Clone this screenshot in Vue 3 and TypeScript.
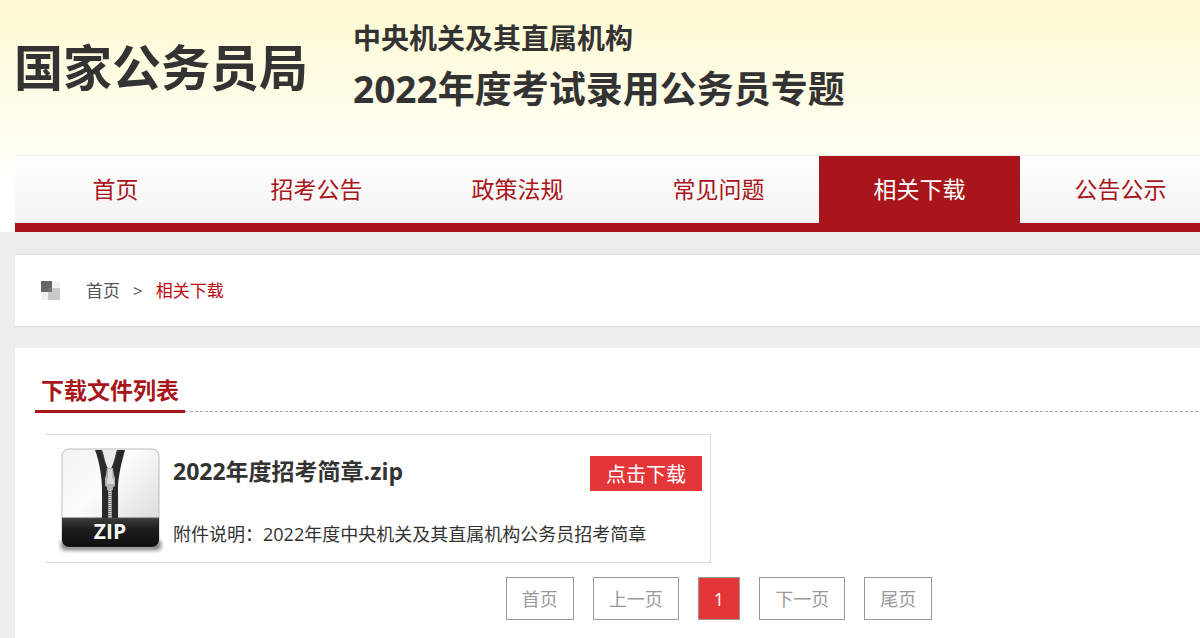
<script setup lang="ts">
import { ref } from 'vue'

interface DownloadFile {
  name: string
  note: string
}

const tabs: string[] = ['首页', '招考公告', '政策法规', '常见问题', '相关下载', '公告公示']
const activeTab = ref('相关下载')

const files: DownloadFile[] = [
  { name: '2022年度招考简章.zip', note: '附件说明：2022年度中央机关及其直属机构公务员招考简章' },
]

const pages: string[] = ['首页', '上一页', '1', '下一页', '尾页']
const currentPage = '1'
</script>

<template>
  <div class="page">
    <header class="header">
      <div class="brand">
        <h1 class="brand-name">国家公务员局</h1>
        <div class="brand-topic">
          <p class="topic-org">中央机关及其直属机构</p>
          <p class="topic-title">2022年度考试录用公务员专题</p>
        </div>
      </div>
      <nav class="nav wide">
        <a
          v-for="tab in tabs"
          :key="tab"
          href="#"
          class="tab"
          :class="{ active: tab === activeTab }"
          @click.prevent="activeTab = tab"
        >{{ tab }}</a>
      </nav>
    </header>

    <nav class="crumbs wide" aria-label="当前位置">
      <svg class="crumb-icon" width="20" height="20" viewBox="0 0 20 20" aria-hidden="true">
        <rect x="11" y="0" width="8" height="8" fill="#f4f4f4" />
        <rect x="0" y="11" width="8" height="8" fill="#f0f0f0" />
        <rect x="7" y="7" width="12" height="12" fill="#cacaca" />
        <rect x="0" y="0" width="11" height="11" fill="#666" />
        <rect x="7" y="7" width="4" height="4" fill="#727272" />
      </svg>
      <a href="#" class="crumb">首页</a>
      <span class="crumb-sep">&gt;</span>
      <a href="#" class="crumb current">相关下载</a>
    </nav>

    <main class="panel wide">
      <div class="panel-head">
        <h2 class="panel-title">下载文件列表</h2>
      </div>

      <article v-for="file in files" :key="file.name" class="file">
        <svg class="file-icon" width="106" height="108" viewBox="0 0 106 108" role="img">
          <defs>
            <linearGradient id="face" x1="0" y1="0" x2="1" y2="1">
              <stop offset="0" stop-color="#f2f2f2" />
              <stop offset="0.4" stop-color="#fcfcfc" />
              <stop offset="1" stop-color="#d2d2d2" />
            </linearGradient>
            <linearGradient id="band" x1="0" y1="0" x2="0" y2="1">
              <stop offset="0" stop-color="#3c3c3c" />
              <stop offset="0.4" stop-color="#1c1c1c" />
              <stop offset="1" stop-color="#101010" />
            </linearGradient>
            <filter id="soft" x="-10%" y="-100%" width="120%" height="300%">
              <feGaussianBlur stdDeviation="2" />
            </filter>
          </defs>
          <rect x="3" y="94" width="100" height="10" rx="4" fill="#777" filter="url(#soft)" />
          <rect x="4" y="3" width="97" height="98" rx="7" fill="url(#face)" stroke="#bcbcbc" />
          <path d="M4 72h97v22a7 7 0 0 1-7 7H11a7 7 0 0 1-7-7z" fill="url(#band)" />
          <path d="M4 72h97" stroke="#555" />
          <path d="M44 4h16l-6 20h-4z" fill="#ececec" />
          <path d="M37 4h7c2 4 3 15 7 20l1 10v38h-8V43c0-12-3-29-7-39z" fill="#292929" />
          <path d="M67 4h-8c-2 5-3 15-7 20l-1 10 1 38h8V43c0-13 4-28 7-39z" fill="#292929" />
          <path d="M43 5c3 5 4 14 7 19M60 5c-3 6-4 14-7 19" fill="none" stroke="#777" stroke-dasharray="1 2" />
          <path d="M52 40v32" stroke="#777" stroke-width="4" />
          <path d="M52 40v32" stroke="#ddd" stroke-width="3" stroke-dasharray="1 1" />
          <path d="M49 22h6l1 7 1 3v8l-2 1v3h-6v-3l-2-1v-8l1-3z" fill="#b2b2b2" />
          <path d="M50 23h4v8l2 3v4h-7v-4l1-3z" fill="#d9d9d9" />
          <text x="52" y="93" text-anchor="middle" class="zip-label">ZIP</text>
        </svg>
        <div class="file-body">
          <div class="file-top">
            <h3 class="file-name">{{ file.name }}</h3>
            <button type="button" class="download">点击下载</button>
          </div>
          <p class="file-note">{{ file.note }}</p>
        </div>
      </article>

      <nav class="pager" aria-label="分页">
        <button
          v-for="page in pages"
          :key="page"
          type="button"
          class="page-btn"
          :class="{ active: page === currentPage }"
        >{{ page }}</button>
      </nav>
    </main>
  </div>
</template>

<style>
body {
  background: #ededed;
}
</style>

<style scoped>
.page {
  min-height: 100vh;
  display: flex;
  flex-direction: column;
  overflow: hidden;
  box-sizing: border-box;
  background: #ededed;
  color: #333;
  font-family: "Open Sans", "Noto Sans CJK SC", sans-serif;
}
h1, h2, h3, p {
  margin: 0;
}
a {
  text-decoration: none;
}
button {
  font-family: inherit;
  cursor: pointer;
}
.wide {
  box-sizing: border-box;
  min-width: 1408px;
  margin-left: 15px;
}
.header {
  background: linear-gradient(#fffad4 0, #fffad8 30px, #fffef4 150px, #fff 190px);
}
.brand {
  display: flex;
  height: 155px;
  padding: 0 14px;
  box-sizing: border-box;
  white-space: nowrap;
}
.brand-name {
  margin-right: 45px;
  padding-top: 32px;
  font-size: 49px;
  line-height: 70px;
}
.brand-topic {
  padding-top: 18px;
  font-weight: 700;
}
.topic-org {
  font-size: 28px;
  line-height: 40px;
}
.topic-title {
  font-size: 37px;
  line-height: 62px;
}
.nav {
  display: flex;
  border-top: 1px solid #ececec;
  border-bottom: 9px solid #a8151a;
  background: linear-gradient(#fff, #f3f3f3);
}
.tab {
  flex: 0 0 201px;
  text-align: center;
  font-size: 23px;
  line-height: 67px;
  color: #a8151a;
}
.tab.active {
  background: #a8151a;
  color: #fff;
}
.crumbs {
  display: flex;
  align-items: center;
  margin-top: 22px;
  padding: 0 26px;
  border: 1px solid #dcdcdc;
  border-left: 0;
  background: #fff;
  font-size: 17px;
  line-height: 71px;
}
.crumb-icon {
  margin-right: 25px;
}
.crumb {
  color: #555;
}
.crumb.current {
  color: #b8070f;
}
.crumb-sep {
  margin: 0 13px;
  color: #555;
}
.panel {
  flex: 1;
  margin-top: 21px;
  padding: 22px 20px 18px;
  background: #fff;
}
.panel-head {
  display: flex;
  background: linear-gradient(90deg, #aaa 60%, transparent 60%) 0 41px / 5px 1px repeat-x;
}
.panel-title {
  padding: 0 6px;
  border-bottom: 3px solid #a8151a;
  color: #a8151a;
  font-size: 23px;
  line-height: 40px;
}
.file {
  display: flex;
  box-sizing: border-box;
  width: 665px;
  height: 129px;
  margin: 21px 0 0 11px;
  padding: 11px 8px 0 12px;
  border: 1px solid #d9d9d9;
  border-left: 0;
}
.file-icon {
  flex: none;
  margin-right: 9px;
}
.zip-label {
  font-family: "Open Sans", sans-serif;
  font-size: 21px;
  font-weight: 700;
  fill: #f2f2f2;
}
.file-body {
  flex: 1;
}
.file-top {
  display: flex;
  justify-content: space-between;
  align-items: flex-start;
  padding-top: 10px;
}
.file-name {
  font-size: 23px;
  line-height: 30px;
}
.download {
  width: 112px;
  height: 35px;
  padding: 3px 0 0;
  border: 0;
  background: #e43639;
  color: #fff;
  font-size: 20px;
  line-height: 32px;
}
.file-note {
  padding-top: 28px;
  font-size: 18px;
  line-height: 30px;
  white-space: nowrap;
}
.pager {
  display: flex;
  justify-content: center;
  gap: 19px;
  margin-top: 14px;
}
.page-btn {
  box-sizing: border-box;
  height: 43px;
  padding: 2px 15px 0;
  border: 1px solid #999;
  background: #fff;
  color: #999;
  font-size: 18px;
  line-height: 39px;
}
.page-btn.active {
  background: #e43639;
  color: #fff;
}
</style>
